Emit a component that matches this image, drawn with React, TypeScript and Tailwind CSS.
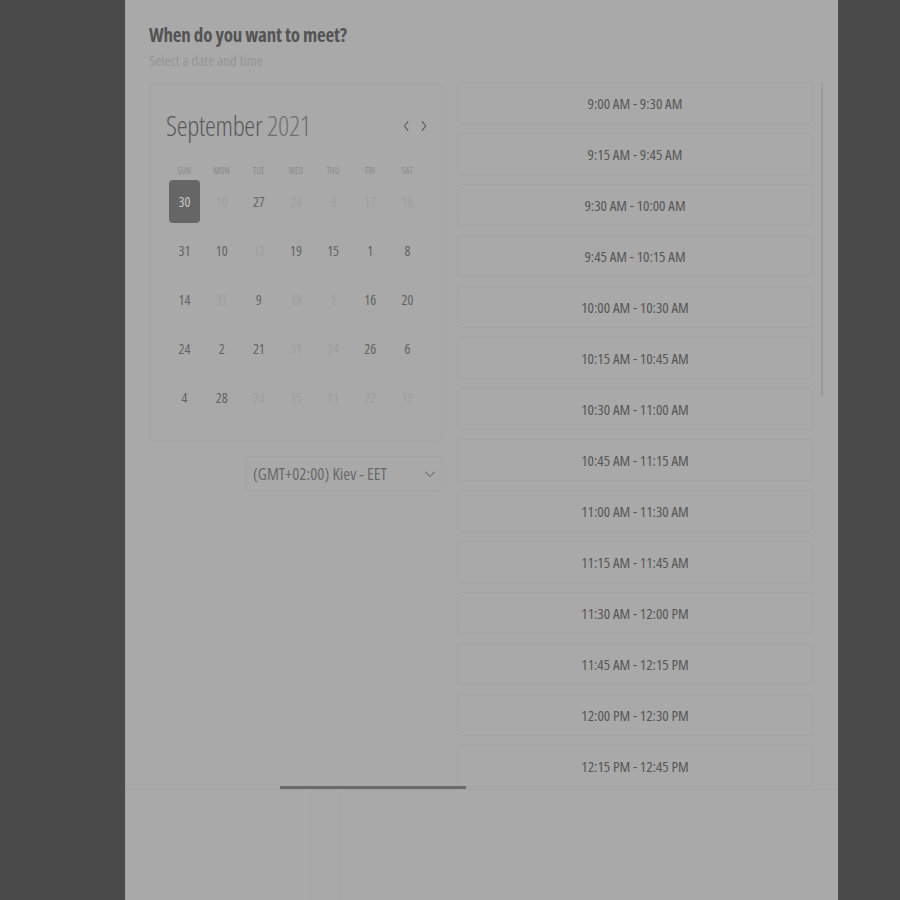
const headers = ['SUN', 'MON', 'TUE', 'WED', 'THU', 'FRI', 'SAT'];

type Day = { n: number; on: boolean; sel?: boolean };

const weeks: Day[][] = [
  [{ n: 30, on: true, sel: true }, { n: 10, on: false }, { n: 27, on: true }, { n: 24, on: false }, { n: 9, on: false }, { n: 17, on: false }, { n: 18, on: false }],
  [{ n: 31, on: true }, { n: 10, on: true }, { n: 12, on: false }, { n: 19, on: true }, { n: 15, on: true }, { n: 1, on: true }, { n: 8, on: true }],
  [{ n: 14, on: true }, { n: 31, on: false }, { n: 9, on: true }, { n: 18, on: false }, { n: 1, on: false }, { n: 16, on: true }, { n: 20, on: true }],
  [{ n: 24, on: true }, { n: 2, on: true }, { n: 21, on: true }, { n: 31, on: false }, { n: 24, on: false }, { n: 26, on: true }, { n: 6, on: true }],
  [{ n: 4, on: true }, { n: 28, on: true }, { n: 24, on: false }, { n: 15, on: false }, { n: 11, on: false }, { n: 22, on: false }, { n: 19, on: false }],
];

const slots = [
  '9:00 AM - 9:30 AM',
  '9:15 AM - 9:45 AM',
  '9:30 AM - 10:00 AM',
  '9:45 AM - 10:15 AM',
  '10:00 AM - 10:30 AM',
  '10:15 AM - 10:45 AM',
  '10:30 AM - 11:00 AM',
  '10:45 AM - 11:15 AM',
  '11:00 AM - 11:30 AM',
  '11:15 AM - 11:45 AM',
  '11:30 AM - 12:00 PM',
  '11:45 AM - 12:15 PM',
  '12:00 PM - 12:30 PM',
  '12:15 PM - 12:45 PM',
];

function Chevron({ dir }: { dir: 'left' | 'right' | 'down' }) {
  const d = dir === 'left' ? 'M9 3 L5 8 L9 13' : dir === 'right' ? 'M6 3 L10 8 L6 13' : 'M3 6 L8 11 L13 6';
  return (
    <svg width="14" height="16" viewBox="0 0 16 16" fill="none" stroke="currentColor" strokeWidth="1.3" strokeLinecap="round" strokeLinejoin="round">
      <path d={d} />
    </svg>
  );
}

export default function App() {
  return (
    <div className="w-[900px] h-[900px] bg-[#4b4b4b] flex justify-start overflow-hidden font-['Open_Sans',sans-serif] [font-stretch:condensed]">
      <div className="ml-[125px] w-[713px] h-[900px] bg-[#a9a9a9] border-l border-[#a2a2a2] flex flex-col">
        <div className="h-[790px] border-b border-[#a3a3a3] pl-[23px] pt-[22px] flex flex-col overflow-hidden">
          <h1 className="text-[19px] leading-[26px] font-bold text-[#545454] tracking-[-0.2px]">When do you want to meet?</h1>
          <p className="text-[15px] leading-[20px] text-[#959595] mt-[2px]">Select a date and time</p>

          <div className="flex mt-[13px] gap-[15px] min-h-0 flex-1">
            <div className="w-[293px] flex flex-col">
              <div className="h-[359px] border border-[#a3a3a3] rounded-[4px] pl-[16px] pr-[10px] pt-[22px]">
                <div className="flex items-center justify-between">
                  <div className="text-[27.5px] leading-[40px] font-light text-[#5a5a5a] tracking-[-0.3px]">
                    September <span className="text-[#707070]">2021</span>
                  </div>
                  <div className="flex gap-[3px] text-[#5a5a5a]">
                    <Chevron dir="left" />
                    <Chevron dir="right" />
                  </div>
                </div>
                <div className="grid grid-cols-7 w-[260px] mt-[18px]">
                  {headers.map((h) => (
                    <div key={h} className="text-center text-[8.5px] leading-[14px] text-[#888888] tracking-[0.3px]">{h}</div>
                  ))}
                </div>
                <div className="grid grid-cols-7 w-[260px] mt-[2px]">
                  {weeks.flat().map((d, i) => (
                    <div key={i} className="h-[49px] flex items-start justify-center">
                      <div
                        className={
                          d.sel
                            ? 'w-[31px] h-[43px] rounded-[4px] bg-[#666666] text-[#c8c8c8] text-[14px] flex items-center justify-center'
                            : d.on
                            ? 'w-[31px] h-[43px] text-[#636363] text-[14px] flex items-center justify-center'
                            : 'w-[31px] h-[43px] text-[#9e9e9e] text-[14px] flex items-center justify-center'
                        }
                      >
                        {d.n}
                      </div>
                    </div>
                  ))}
                </div>
              </div>
              <div className="flex justify-end mt-[14px]">
                <div className="w-[197px] h-[35px] border border-[#a3a3a3] rounded-[4px] flex items-center justify-between pl-[7px] pr-[4px]">
                  <span className="text-[16.75px] text-[#6a6a6a]">(GMT+02:00) Kiev - EET</span>
                  <span className="text-[#777777]"><Chevron dir="down" /></span>
                </div>
              </div>
            </div>

            <div className="flex gap-[8px] -mt-[1px]">
              <div className="w-[356px] flex flex-col gap-[9px]">
                {slots.map((s) => (
                  <div key={s} className="h-[42px] shrink-0 border border-[#a2a2a2] rounded-[4px] flex items-center justify-center text-[15px] text-[#575757]">
                    {s}
                  </div>
                ))}
              </div>
              <div className="w-[2px] h-[315px] bg-[#9c9c9c]" />
            </div>
          </div>
        </div>

        <div className="relative flex-1 flex">
          <div className="absolute left-[154px] top-[-4px] w-[186px] h-[3px] bg-[#6b6b6b]" />
          <div className="ml-[184px] w-[1px] bg-[#a5a5a5]" />
          <div className="ml-[29px] w-[1px] bg-[#a5a5a5]" />
        </div>
      </div>
    </div>
  );
}
